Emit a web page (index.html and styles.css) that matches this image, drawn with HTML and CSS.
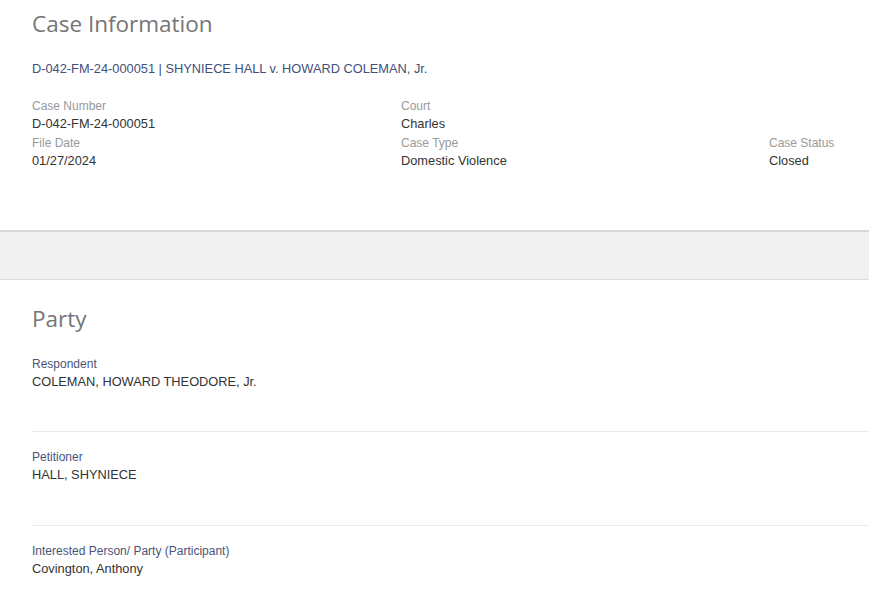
FILE: index.html
```html
<!DOCTYPE html>
<html>
<head>
	<meta charset="utf-8">
	<title>Case Information</title>
	<link rel="stylesheet" href="styles.css">
</head>
<body>
	<!-- case info -->
	<div class="panel">
		<h2 class="panel-title">Case Information</h2>
		<div class="case-title">D-042-FM-24-000051 | SHYNIECE HALL v. HOWARD COLEMAN, Jr.</div>
		<div class="fields">
			<div class="field">
				<div class="label">Case Number</div>
				<div class="value">D-042-FM-24-000051</div>
			</div>
			<div class="field">
				<div class="label">Court</div>
				<div class="value">Charles</div>
			</div>
			<div class="field"></div>
			<div class="field">
				<div class="label">File Date</div>
				<div class="value">01/27/2024</div>
			</div>
			<div class="field">
				<div class="label">Case Type</div>
				<div class="value">Domestic Violence</div>
			</div>
			<div class="field">
				<div class="label">Case Status</div>
				<div class="value">Closed</div>
			</div>
		</div>
	</div>

	<div class="band"></div>

	<!-- party -->
	<div class="panel party">
		<h2 class="panel-title">Party</h2>
		<div class="party-item first">
			<div class="party-label">Respondent</div>
			<div class="value">COLEMAN, HOWARD THEODORE, Jr.</div>
		</div>
		<div class="party-item">
			<div class="party-label">Petitioner</div>
			<div class="value">HALL, SHYNIECE</div>
		</div>
		<div class="party-item">
			<div class="party-label">Interested Person/ Party (Participant)</div>
			<div class="value">Covington, Anthony</div>
		</div>
	</div>
</body>
</html>
```

FILE: styles.css
```css
* {
	padding: 0px;
	margin: 0px;
}
body {
	background: #fff;
	font-family: "Liberation Sans", Arial, sans-serif;
	color: #333;
	overflow: hidden;
}
.panel {
	padding-left: 32px;
}
.panel-title {
	font-family: "Open Sans", "Liberation Sans", sans-serif;
	font-weight: normal;
	font-size: 22.5px;
	line-height: 30px;
	color: #757575;
	margin-top: 9px;
}
.case-title {
	margin-top: 21px;
	font-size: 12.8px;
	line-height: 18px;
	color: #43507a;
}
.fields {
	display: grid;
	grid-template-columns: 369px 368px auto;
	margin-top: 19px;
	height: 133px;
	align-content: start;
}
.label {
	font-size: 12px;
	line-height: 18px;
	color: #999;
}
.value {
	font-size: 12.8px;
	line-height: 17px;
	padding-bottom: 2px;
	color: #333;
}
.band {
	height: 47px;
	background: #f1f1f1;
	border-top: 2px solid #d8d8d8;
	border-bottom: 1px solid #dcdcdc;
}
.party .panel-title {
	margin-top: 24px;
}
.party-item {
	padding: 16px 0 40px;
	border-top: 1px solid #ebebeb;
}
.party-item.first {
	border-top: none;
	padding-top: 21px;
	padding-bottom: 39px;
}
.party-label {
	font-size: 12px;
	line-height: 18px;
	color: #4a5479;
}
```
